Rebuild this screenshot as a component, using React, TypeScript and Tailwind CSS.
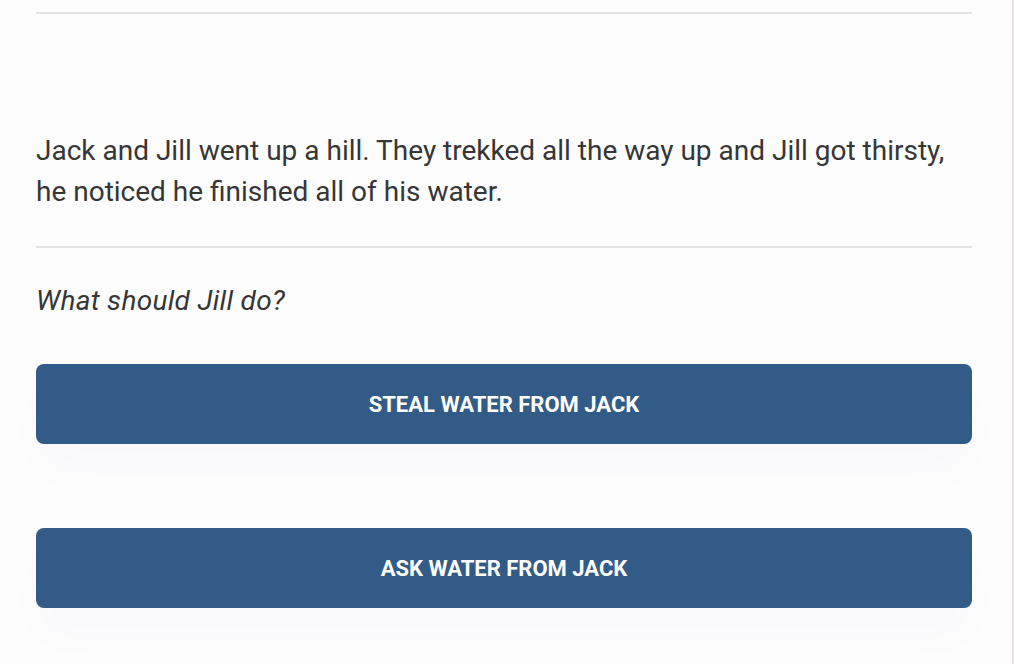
export default function App() {
    return (
        <div className="w-[1014px] h-[664px] bg-[#fdfdfd] flex overflow-hidden" style={{ fontFamily: 'Roboto, "Liberation Sans", sans-serif' }}>
            <div className="flex-1 border-r-2 border-[#e6e3dc]">
                <div className="ml-9 mr-10 pt-3">
                    {/* 상단 구분선 */}
                    <div className="h-[2px] bg-[#e3e3e3]" />

                    {/* 본문 */}
                    <p className="mt-[116px] text-[28px] leading-[41px] text-[#363636]">
                        Jack and Jill went up a hill. They trekked all the way up and Jill got thirsty, he noticed he finished all of his water.
                    </p>

                    <div className="mt-[34px] h-[2px] bg-[#e3e3e3]" />

                    {/* 질문 */}
                    <p className="mt-[33px] text-[28px] leading-[40px] italic tracking-[0.3px] text-[#363636]">
                        What should Jill do?
                    </p>

                    {/* 선택지 */}
                    <div className="mt-[43px] flex flex-col gap-[84px]">
                        {["Steal water from Jack", "Ask water from Jack"].map((label) => (
                            <button
                                key={label}
                                className="h-[80px] w-full rounded-lg bg-[#325b87] text-white text-[22px] font-bold uppercase shadow-[0_30px_40px_-10px_rgba(140,110,230,0.04)]"
                            >
                                {label}
                            </button>
                        ))}
                    </div>
                </div>
            </div>
        </div>
    );
}
